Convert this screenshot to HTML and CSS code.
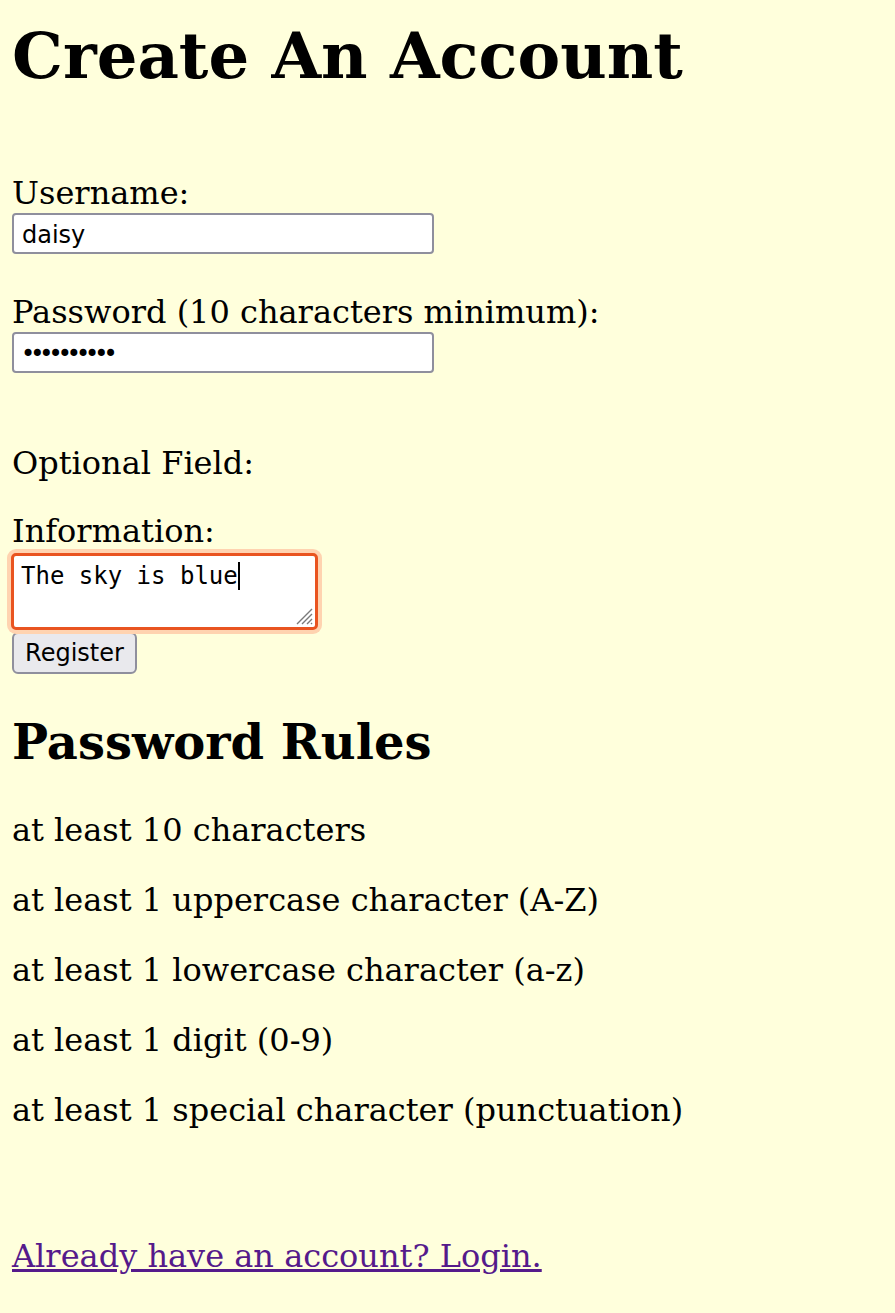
FILE: index.html
```html
<!DOCTYPE html>
<html>
<head>
<meta charset="utf-8">
<title>Create An Account</title>
<link rel="stylesheet" href="styles.css">
</head>
<body>
<h1 class="title">Create An Account</h1>
<form class="form">
  <label class="label label-user" for="u">Username:</label>
  <input class="field" id="u" type="text" value="daisy">
  <label class="label label-pass" for="p">Password (10 characters minimum):</label>
  <input class="field field-pass" id="p" type="password" value="abcdefghij">
  <div class="label label-opt">Optional Field:</div>
  <label class="label label-info" for="i">Information:</label>
  <div class="area">The sky is blue<span class="caret"></span><svg class="grip" width="20" height="20" viewBox="0 0 20 20"><path d="M19 4 L4 19 M19 9 L9 19 M19 14 L14 19 M19 18 L18 19" stroke="#7a7a7a" stroke-width="1.4" fill="none"/></svg></div>
  <button class="btn" type="button">Register</button>
</form>
<h2 class="subtitle">Password Rules</h2>
<p class="rule rule-first">at least 10 characters</p>
<p class="rule">at least 1 uppercase character (A-Z)</p>
<p class="rule">at least 1 lowercase character (a-z)</p>
<p class="rule">at least 1 digit (0-9)</p>
<p class="rule">at least 1 special character (punctuation)</p>
<a class="login" href="#">Already have an account? Login.</a>
</body>
</html>
```
FILE: styles.css
```css
html { background: #ffffdc; }
body {
  margin: 0;
  padding: 0 12px;
  background: #ffffdc;
  font-family: "DejaVu Serif", serif;
  font-size: 32px;
  line-height: 37px;
  color: #000;
}
.title {
  font-size: 64px;
  line-height: 75px;
  font-weight: bold;
  margin: 18px 0 0;
}
.form { display: block; margin: 0; }
.label { display: block; }
.label-user { margin-top: 82px; }
.label-pass { margin-top: 40px; }
.label-opt { margin-top: 72px; }
.label-info { margin-top: 31px; }
.field {
  display: block;
  box-sizing: border-box;
  width: 422px;
  height: 41px;
  margin: 1px 0 0;
  padding: 2px 8px 0;
  border: 2px solid #8f8f9d;
  border-radius: 4px;
  background: #fff;
  font-family: "DejaVu Sans", sans-serif;
  font-size: 24px;
  color: #000;
}
.field-pass { letter-spacing: -5px; padding-left: 7px; }
.area {
  position: relative;
  box-sizing: border-box;
  width: 307px;
  height: 77px;
  margin: 3px 0 0 -1px;
  padding: 6px 7px 4px;
  border: 3px solid #e95420;
  border-radius: 5px;
  box-shadow: 0 0 0 4px #ffd3b0;
  background: #fff;
  font-family: "DejaVu Sans Mono", monospace;
  font-size: 24px;
  line-height: 28px;
  white-space: pre;
}
.caret {
  display: inline-block;
  width: 2px;
  height: 28px;
  background: #000;
  vertical-align: top;
}
.grip { position: absolute; right: 2px; bottom: 2px; }
.btn {
  display: block;
  box-sizing: border-box;
  width: 125px;
  height: 42px;
  margin: 2px 0 0;
  padding: 0;
  border: 2px solid #8f8f9d;
  border-radius: 6px;
  background: #e9e9ed;
  font-family: "DejaVu Sans", sans-serif;
  font-size: 24px;
  color: #000;
}
.subtitle {
  font-size: 48px;
  line-height: 56px;
  font-weight: bold;
  margin: 40px 0 0;
}
.rule { margin: 33px 0 0; }
.rule-first { margin-top: 42px; }
.login {
  display: inline-block;
  margin-top: 109px;
  color: #551a8b;
  text-decoration: underline;
}
```
